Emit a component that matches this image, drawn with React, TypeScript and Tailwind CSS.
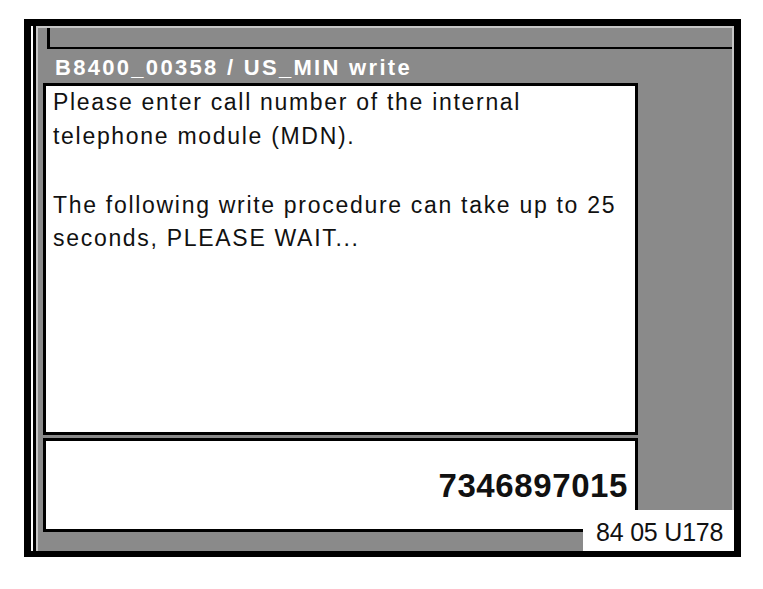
export default function App() {
  return (
    <div className="min-h-[589px] w-[763px] bg-white pl-[24px] pt-[19px] font-['Liberation_Sans',Arial,sans-serif]">
      <div className="flex h-[538px] w-[717px] border-x-[7px] border-t-[7px] border-b-[6px] border-black bg-white">
        <div className="w-[2px] shrink-0 bg-white" />
        <div className="w-[3px] shrink-0 bg-black" />
        <div className="relative flex flex-1 flex-col border-x-2 border-t-2 border-[#c6c6c6] bg-[#8a8a8a]">
          <div className="ml-[9px] h-[21px] shrink-0 border-b-2 border-l-[3px] border-black bg-[#8a8a8a]" />
          <div className="h-[34px] shrink-0 whitespace-nowrap pl-[17px] pt-[4px] text-[22px] font-bold leading-[30px] tracking-[2.3px] text-white">
            B8400_00358 / US_MIN write
          </div>
          <div className="flex">
            <div className="ml-[5px] flex w-[595px] flex-col">
              <div className="h-[352px] border-[3px] border-black bg-white pl-[7px] text-[23px] leading-[34px] tracking-[1.7px] text-[#111]">
                <div className="-mt-px whitespace-nowrap">Please enter call number of the internal</div>
                <div className="whitespace-nowrap">telephone module (MDN).</div>
                <div className="mt-[35px] whitespace-nowrap">The following write procedure can take up to 25</div>
                <div className="-mt-px whitespace-nowrap">seconds, PLEASE WAIT...</div>
              </div>
              <div className="h-[3px]" />
              <div className="flex h-[94px] justify-end border-[3px] border-black bg-white pr-[7px] pt-[28px]">
                <span className="text-[33px] font-bold leading-[33px] tracking-[0.6px] text-[#111]">7346897015</span>
              </div>
            </div>
          </div>
          <div className="absolute bottom-0 right-[-2px] h-[41px] w-[151px] whitespace-nowrap bg-white pl-[13px] pt-[3px] text-[25px] leading-[38px] tracking-[-0.2px] text-[#111]">
            84 05 U178
          </div>
        </div>
      </div>
    </div>
  );
}
